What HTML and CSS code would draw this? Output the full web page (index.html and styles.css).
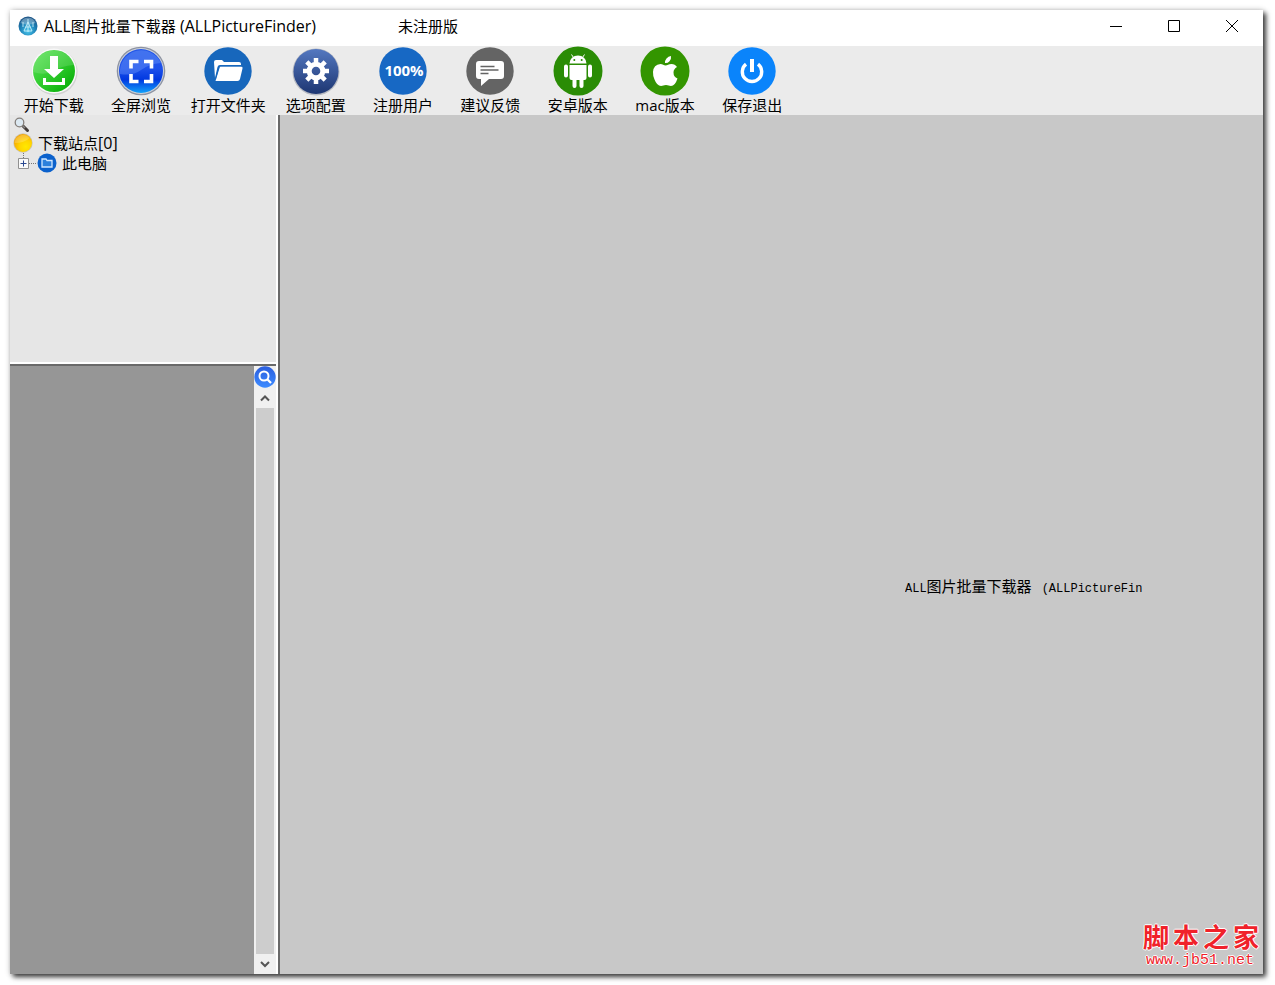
FILE: index.html
```html
<!DOCTYPE html>
<html lang="zh-CN">
<head>
<meta charset="utf-8">
<title>ALL图片批量下载器</title>
<link rel="stylesheet" href="styles.css">
</head>
<body>
<div class="window">
  <header class="titlebar">
    <svg class="app-icon" viewBox="0 0 20 20" aria-hidden="true">
      <defs><radialGradient id="app" cx=".5" cy=".75" r=".7"><stop offset="0" stop-color="#4cc9ee"/><stop offset=".6" stop-color="#1c7fb5"/><stop offset="1" stop-color="#1d5688"/></radialGradient></defs>
      <circle cx="10" cy="10" r="9.500" fill="url(#app)"/>
      <path d="M2.500 7a8 8 0 0 1 15 0q-7.500 3-15 0z" fill="#fff" opacity=".3"/>
      <path d="M10 3v13M10 6L6 15M10 6l4 9M7.500 11h5M6 15h8M5 6v5M15 6v5" fill="none" stroke="#c8effa" stroke-width=".9"/>
    </svg>
    <h1 class="title"><span class="large">ALL</span>图片批量下载器<span class="large"> (ALLPictureFinder)</span></h1>
    <span class="license">未注册版</span>
    <div class="controls">
      <button class="control" aria-label="最小化"><svg viewBox="0 0 12 12"><path d="M0 6.500h12"/></svg></button>
      <button class="control" aria-label="最大化"><svg viewBox="0 0 12 12"><path d="M.5.5h11v11H.5z"/></svg></button>
      <button class="control" aria-label="关闭"><svg viewBox="0 0 12 12"><path d="M0 0l12 12M12 0L0 12"/></svg></button>
    </div>
  </header>

  <nav class="toolbar">
    <button class="tool">
      <svg viewBox="0 0 50 50"><defs><linearGradient id="dl" x2="1" y2="1"><stop offset="0" stop-color="#5ee45a"/><stop offset=".5" stop-color="#2fcb2d"/><stop offset="1" stop-color="#00a800"/></linearGradient></defs>
        <circle cx="25.500" cy="26" r="23" fill="#d2d2d2"/><circle cx="25" cy="25" r="22.500" fill="#f8f8f8"/><circle cx="25" cy="25" r="21" fill="url(#dl)"/><path d="M4 26a21 21 0 0 1 41-7Q32 20 24 25T4 26z" fill="#fff" opacity=".14"/>
        <path d="M21 10h8v13h6L25 32 15 23h6zM14 32h3v4h16v-4h3v7H14z" fill="#fff"/></svg>
      <span>开始下载</span>
    </button>
    <button class="tool">
      <svg viewBox="0 0 50 50"><defs><linearGradient id="fs" x2="0" y2="1"><stop offset="0" stop-color="#2458e8"/><stop offset=".45" stop-color="#1d50ea"/><stop offset=".7" stop-color="#0038e0"/><stop offset="1" stop-color="#12a2fa"/></linearGradient></defs>
        <circle cx="25" cy="25" r="24.300" fill="#8d93a2"/><circle cx="25" cy="25" r="23" fill="#cfd3da"/><circle cx="25" cy="25" r="22" fill="url(#fs)"/><path d="M4 28a21.500 21.500 0 0 1 41-11Q33 18 25 24T4 28z" fill="#8ab4ff" opacity=".3"/>
        <path d="M22.500 15.500h-7.500v7M28 15.500h7.500v7M35.500 28v7.500h-7.500M22.500 35.500h-7.500v-7.500" fill="none" stroke="#fff" stroke-width="3.600"/></svg>
      <span>全屏浏览</span>
    </button>
    <button class="tool">
      <svg viewBox="0 0 50 50"><circle cx="25" cy="25" r="23.700" fill="#1767bc"/><path d="M11 16q0-2 2-2h6l2 2h15q2 0 2 2v1H17q-2 0-2.500 2L12 32z" fill="#fff"/><path d="M17 20.500h21q2 0 1.500 2L37 33q-.5 2-2.500 2H12.500z" fill="#fff"/><path d="M12.500 33l3-11q.5-2 2.500-2h21" fill="none" stroke="#1767bc" stroke-width=".8"/></svg>
      <span>打开文件夹</span>
    </button>
    <button class="tool">
      <svg viewBox="0 0 50 50"><defs><linearGradient id="gear" x2="0" y2="1"><stop offset="0" stop-color="#5478c0"/><stop offset="1" stop-color="#1d3672"/></linearGradient></defs>
        <circle cx="25" cy="26" r="23.500" fill="#b7bac2"/><circle cx="25" cy="25.500" r="22.500" fill="url(#gear)"/>
        <circle cx="25" cy="25" r="6.800" fill="none" stroke="#fff" stroke-width="5"/>
        <g stroke="#fff" stroke-width="4.500"><path d="M25 12v5M25 33v5M12 25h5M33 25h5M15.800 15.800l3.500 3.500M30.700 30.700l3.500 3.500M34.200 15.800l-3.500 3.500M19.300 30.700l-3.500 3.500"/></g></svg>
      <span>选项配置</span>
    </button>
    <button class="tool">
      <svg viewBox="0 0 50 50"><circle cx="25" cy="25" r="23.700" fill="#1768c4"/><text class="percent" x="26" y="30" text-anchor="middle">100%</text></svg>
      <span>注册用户</span>
    </button>
    <button class="tool">
      <svg viewBox="0 0 50 50"><circle cx="25" cy="25" r="23.700" fill="#646464"/><path d="M14 15h22q3 0 3 3v12q0 3-3 3H24l-8 7v-7h-2q-3 0-3-3V18q0-3 3-3z" fill="#fff"/><path d="M15.500 20.500h14M15.500 24h18M15.500 27.500h8" stroke="#646464" stroke-width="1.600"/></svg>
      <span>建议反馈</span>
    </button>
    <button class="tool">
      <svg viewBox="0 0 50 50"><circle cx="25" cy="25" r="24.500" fill="#2a8c05"/>
        <path d="M16.500 17.500a8.500 8 0 0 1 17 0zM16.500 19h17v13q0 2-2 2h-13q-2 0-2-2z" fill="#fff"/>
        <path d="M20.500 11.500L18.500 8.500M29.500 11.500l2-3" stroke="#fff"/><path d="M13 20.500v9M37 20.500v9M21.500 33v7M28.500 33v7" stroke="#fff" stroke-width="4" stroke-linecap="round"/><circle cx="21.300" cy="14" r="1" fill="#2a8c05"/><circle cx="28.700" cy="14" r="1" fill="#2a8c05"/></svg>
      <span>安卓版本</span>
    </button>
    <button class="tool">
      <svg viewBox="0 0 50 50"><circle cx="25" cy="25" r="24.500" fill="#339500"/><path d="M31 10q.5 3-1.500 5.200T25 17q-.3-2.500 1.500-4.600T31 10z" fill="#fff"/><path d="M25.500 19.500c2 0 3-1.500 6-1.500q3.500 0 5.500 3-3.500 2-3.500 5.500 0 4.500 4 6-2.500 7.500-6.500 7.500c-2 0-2.700-1-5-1s-3 1-5 1q-4 0-6.500-6.500-1.700-4-1.500-7.500.5-7.500 7.500-8c2 0 3.500 1.500 5 1.500z" fill="#fff"/></svg>
      <span>mac版本</span>
    </button>
    <button class="tool">
      <svg viewBox="0 0 50 50"><circle cx="25" cy="25" r="23.700" fill="#0a84fb"/><path d="M19 18.200a9.700 9.700 0 1 0 12 0" fill="none" stroke="#fff" stroke-width="3.400"/><path d="M25 13v13" stroke="#fff" stroke-width="4"/></svg>
      <span>保存退出</span>
    </button>
  </nav>

  <div class="workspace">
    <aside class="sidebar">
      <section class="tree">
        <button class="find" aria-label="查找"><svg viewBox="0 0 16 16"><path d="M9 9l4.500 4.500" stroke="#433d3a" stroke-width="3" stroke-linecap="round"/><path d="M8 8l3 3" stroke="#888" stroke-width="1.500"/><circle cx="5.500" cy="5.500" r="4.300" fill="#dce9f2" stroke="#847f7b" stroke-width="1.300"/></svg></button>
        <ul class="nodes">
          <li class="node">
            <svg class="ball" viewBox="0 0 20 20"><defs><radialGradient id="sun" cx=".65" cy=".7" r=".7"><stop offset="0" stop-color="#ffe900"/><stop offset=".5" stop-color="#ffd400"/><stop offset="1" stop-color="#f5a800"/></radialGradient></defs><circle cx="10" cy="10" r="9.700" fill="#c9c3b3"/><circle cx="10" cy="10" r="9" fill="url(#sun)"/><path d="M1.500 10a8.500 8.500 0 0 1 15-5q-5 5-15 5z" fill="#fff" opacity=".2"/></svg>
            <span>下载站点<span class="large">[0]</span></span>
          </li>
          <li class="node child">
            <button class="expand" aria-label="展开"><svg viewBox="0 0 24 20"><path d="M10.500 0v5M16 10.500h8" stroke="#777" stroke-dasharray="1 1"/><path d="M5.500 5.500h10v10h-10z" fill="#fafafa" stroke="#919191"/><path d="M7.500 10.500h6M10.500 7.500v6" stroke="#27478f"/></svg></button>
            <svg class="folder" viewBox="0 0 20 20"><circle cx="10" cy="10" r="9.500" fill="#0b61cc"/><path d="M5 6h4l1 1.500h5V14H5z" fill="#2c80dc" stroke="#cfe6ff" stroke-width="1.300"/></svg>
            <span>此电脑</span>
          </li>
        </ul>
      </section>
      <section class="preview">
        <div class="canvas"></div>
        <div class="scroller">
          <button class="zoom" aria-label="搜索"><svg viewBox="0 0 22 22"><defs><linearGradient id="zm" x2="0" y2="1"><stop offset="0" stop-color="#2b5ede"/><stop offset="1" stop-color="#3d8bff"/></linearGradient></defs><circle cx="11" cy="11" r="10.700" fill="url(#zm)"/><circle cx="10" cy="10" r="4.500" fill="none" stroke="#fff" stroke-width="2"/><path d="M13 13l4 4" stroke="#fff" stroke-width="2.300"/></svg></button>
          <button class="arrow" aria-label="向上"><svg viewBox="0 0 12 12"><path d="M2 8.500l4-4 4 4"/></svg></button>
          <div class="track"></div>
          <button class="arrow" aria-label="向下"><svg viewBox="0 0 12 12"><path d="M2 4l4 4 4-4"/></svg></button>
        </div>
      </section>
    </aside>
    <main class="stage">
      <p class="caption"><span class="latin">ALL</span>图片批量下载器<span class="latin product">(ALLPictureFinder)</span></p>
      <div class="watermark">
        <strong class="brand"><span>脚</span><span>本</span><span>之</span><span>家</span></strong>
        <span class="site">www.jb51.net</span>
      </div>
    </main>
  </div>
</div>
</body>
</html>
```
FILE: styles.css
```css
* { box-sizing: border-box; }

body {
  margin: 0;
  padding: 10px 12px 11px 10px;
  min-height: 100vh;
  display: flex;
  background: #fff;
  color: #000;
  font: 15px/18px "Open Sans", "Noto Sans CJK SC", sans-serif;
}

button {
  margin: 0;
  padding: 0;
  border: 0;
  background: none;
  color: inherit;
  font: inherit;
}

svg { display: block; }

.window {
  flex: 1;
  min-width: 0;
  display: flex;
  flex-direction: column;
  background: #c8c8c8;
  box-shadow: 0 0 6px rgba(0, 0, 0, .2), 3px 3px 5px rgba(0, 0, 0, .75);
}

.titlebar {
  height: 36px;
  display: flex;
  align-items: center;
  padding: 0 2px 4px 8px;
  background: #fff;
}

.app-icon { width: 20px; height: 20px; }

.title {
  width: 360px;
  margin: 0;
  padding-left: 6px;
  font-size: 15px;
  font-weight: 400;
}

.large { font-size: 16px; }

.controls { display: flex; height: 32px; margin-left: auto; }

.control {
  width: 58px;
  display: grid;
  place-items: center;
}

.control svg {
  width: 12px;
  height: 12px;
  fill: none;
  stroke: #000;
}

.toolbar {
  height: 69px;
  background: #ebebeb;
  display: grid;
  grid-template-columns: repeat(9, minmax(0, 1fr));
  padding-right: calc(100% - 786px);
}

.tool {
  display: flex;
  flex-direction: column;
  align-items: center;
  justify-content: flex-start;
  white-space: nowrap;
}

.tool svg { width: 50px; height: 50px; }

.percent {
  fill: #fff;
  font: bold 15px "Open Sans", sans-serif;
}

.workspace { flex: 1; display: flex; }

.sidebar {
  width: 270px;
  display: flex;
  flex-direction: column;
  border-right: 2px solid #696969;
  box-shadow: inset -2px 0 #fff;
}

.tree {
  height: 251px;
  margin-right: 2px;
  padding-left: 3px;
  background: #e6e6e6;
  border-bottom: 2px solid #696969;
  box-shadow: inset 0 -2px #fff;
}

.find { display: block; padding: 2px 0 0 1px; }
.find svg { width: 16px; height: 16px; }

.nodes { margin: 0; padding: 0; list-style: none; }

.node {
  height: 20px;
  display: flex;
  align-items: center;
}

.ball { width: 20px; height: 20px; margin-right: 5px; }
.expand svg { width: 24px; height: 20px; }
.folder { width: 20px; height: 20px; margin-right: 5px; }

.preview { flex: 1; display: flex; padding-right: 2px; }
.canvas { flex: 1; background: #969696; }

.scroller {
  width: 22px;
  display: flex;
  flex-direction: column;
  align-items: center;
  background: #f0f0f0;
}

.zoom svg { width: 22px; height: 22px; }
.arrow { height: 20px; }

.arrow svg {
  width: 12px;
  height: 12px;
  fill: none;
  stroke: #555;
  stroke-width: 2;
}

.track { flex: 1; width: 18px; background: #cdcdcd; }

.stage {
  flex: 1;
  min-width: 0;
  display: grid;
  grid-template-rows: 1fr auto;
  justify-items: end;
  align-items: center;
  padding: 140px 4px 4px 0;
}

.caption {
  width: 237px;
  margin: 0 117px 0 0;
  overflow: hidden;
  white-space: nowrap;
}

.latin { font: 12px/18px "Liberation Mono", monospace; }
.product { margin-left: 10px; }

.watermark {
  width: 116px;
  color: #f0222a;
  text-shadow: 1px 0 #fff, -1px 0 #fff, 0 1px #fff, 0 -1px #fff;
}

.brand {
  display: flex;
  justify-content: space-between;
  font: 700 26px/32px "Noto Sans CJK SC", sans-serif;
}

.site {
  display: block;
  padding-left: 3px;
  font: 15px/18px "Liberation Mono", monospace;
}
```
